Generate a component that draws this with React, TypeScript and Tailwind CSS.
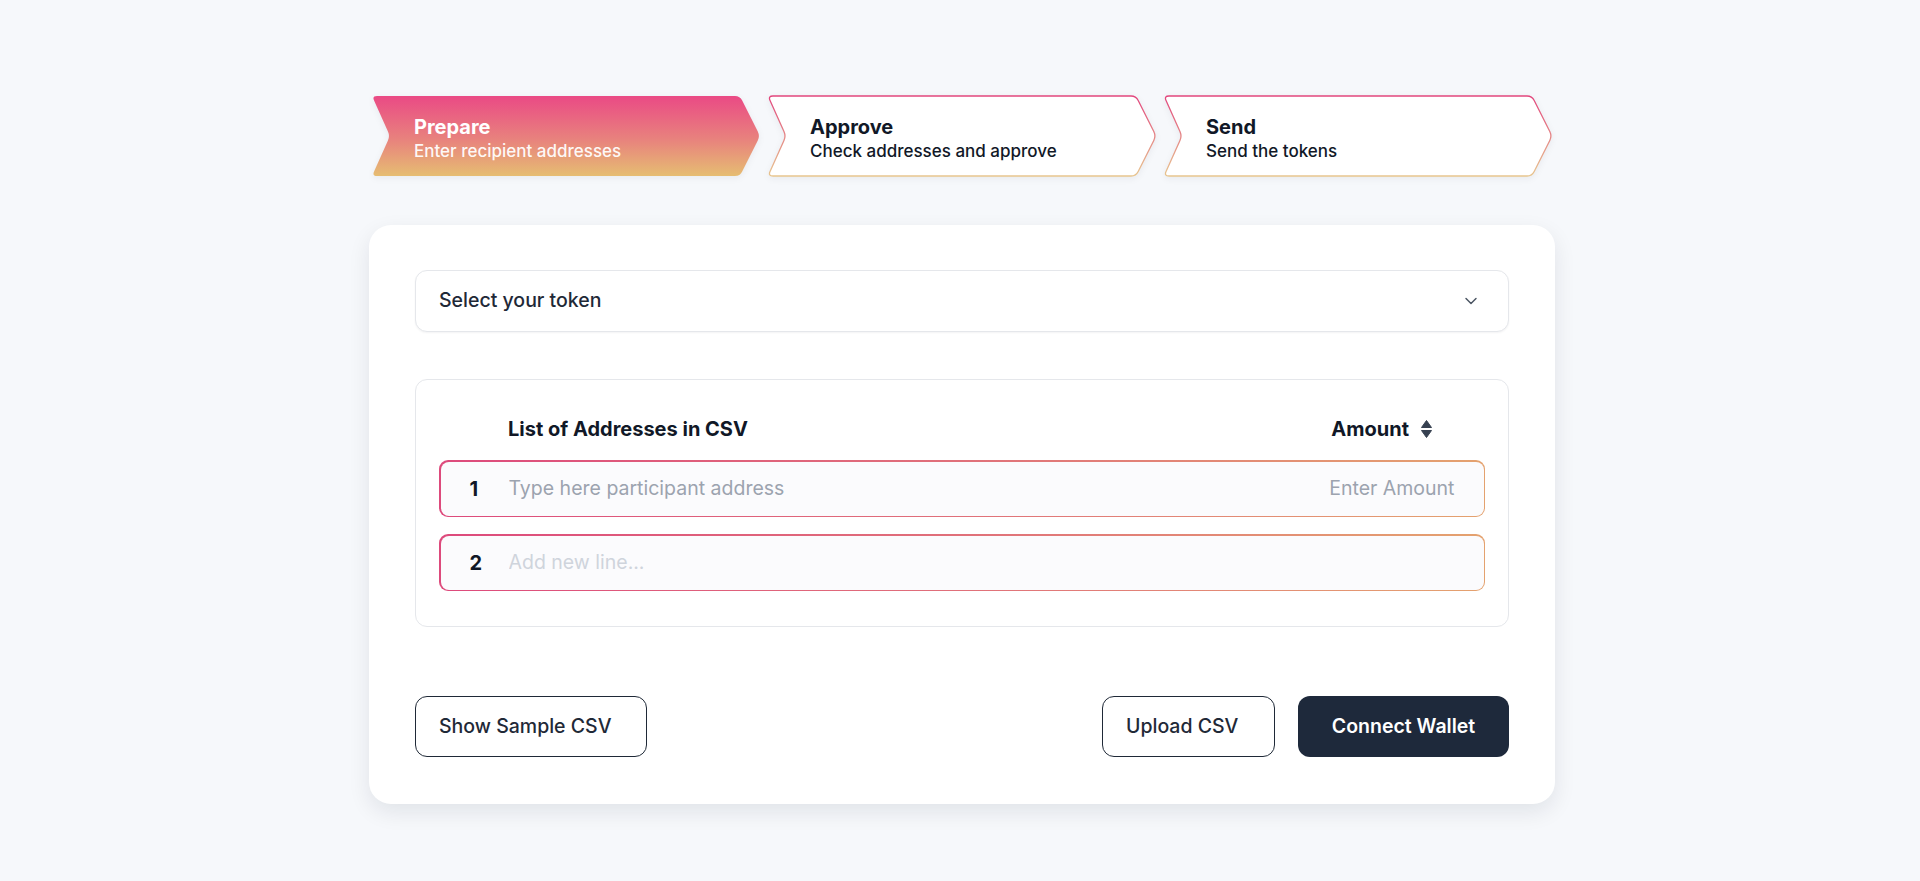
import { ChevronDown } from "lucide-react";

const STEP_PATH =
    "M5,0 L363,0 Q368,0 370.2,4.5 L385.8,35.5 Q388,40 385.8,44.5 L370.2,75.5 Q368,80 363,80 L5,80 Q0,80 2.05,75.45 L15.95,44.55 Q18,40 15.95,35.45 L2.05,4.55 Q0,0 5,0 Z";

interface Step {
    id: string;
    title: string;
    subtitle: string;
    active: boolean;
}

const steps: Step[] = [
    { id: "prepare", title: "Prepare", subtitle: "Enter recipient addresses", active: true },
    { id: "approve", title: "Approve", subtitle: "Check addresses and approve", active: false },
    { id: "send", title: "Send", subtitle: "Send the tokens", active: false },
];

function StepChevron({ step }: { step: Step }) {
    return (
        <div className="relative w-[388px] h-[80px]">
            <svg
                className="absolute inset-0 overflow-visible drop-shadow-[0_2px_3px_rgba(15,23,42,0.06)]"
                width="388"
                height="80"
                viewBox="0 0 388 80"
            >
                <defs>
                    <linearGradient id={`fill-${step.id}`} x1="0" y1="0" x2="0" y2="1">
                        <stop offset="0%" stopColor="#ea4a85" />
                        <stop offset="55%" stopColor="#e8837d" />
                        <stop offset="100%" stopColor="#e6bd72" />
                    </linearGradient>
                    <linearGradient id={`stroke-${step.id}`} x1="0" y1="0" x2="0" y2="1">
                        <stop offset="0%" stopColor="#e2467d" />
                        <stop offset="100%" stopColor="#e7c58e" />
                    </linearGradient>
                </defs>
                {step.active ? (
                    <path d={STEP_PATH} fill={`url(#fill-${step.id})`} />
                ) : (
                    <path d={STEP_PATH} fill="#ffffff" stroke={`url(#stroke-${step.id})`} strokeWidth="1.3" />
                )}
            </svg>
            <div className="relative flex flex-col justify-center h-full pl-[42px] pt-[4px]">
                <div className={`text-[20px] leading-[26px] font-bold ${step.active ? "text-white" : "text-[#111827]"}`}>
                    {step.title}
                </div>
                <div className={`text-[17px] leading-[23px] font-medium ${step.active ? "text-white/95" : "text-[#111827]"}`}>
                    {step.subtitle}
                </div>
            </div>
        </div>
    );
}

function SortIcon() {
    return (
        <svg width="13" height="20" viewBox="0 0 13 20" className="text-[#374151]">
            <path d="M6.5 1.5 L11.5 8.5 L1.5 8.5 Z" fill="currentColor" strokeLinejoin="round" stroke="currentColor" strokeWidth="1" />
            <path d="M6.5 18.5 L11.5 11.5 L1.5 11.5 Z" fill="currentColor" strokeLinejoin="round" stroke="currentColor" strokeWidth="1" />
        </svg>
    );
}

function AddressRow({ num, placeholder, showAmount }: { num: number; placeholder: string; showAmount: boolean }) {
    return (
        <div className="rounded-[9px] p-[1.5px] bg-gradient-to-r from-[#dd4a7c] via-[#e0707a] to-[#e4a26f]">
            <div className="flex items-center h-[54px] rounded-[8px] bg-[#fbfbfd] pl-[29px] pr-[29px]">
                <span className="w-[39px] text-[20px] font-bold text-[#111827]">{num}</span>
                <input
                    type="text"
                    placeholder={placeholder}
                    className={`flex-1 bg-transparent outline-none text-[19.5px] text-[#111827] ${
                        showAmount ? "placeholder-[#9ca3af]" : "placeholder-[#cfd4dc]"
                    }`}
                />
                {showAmount && (
                    <input
                        type="text"
                        placeholder="Enter Amount"
                        className="w-[150px] bg-transparent outline-none text-right text-[19.5px] text-[#111827] placeholder-[#9ca3af]"
                    />
                )}
            </div>
        </div>
    );
}

export default function App() {
    return (
        <div
            className="min-h-screen bg-[#f6f8fb] pt-[96px] pb-[78px] pl-[4px]"
            style={{ fontFamily: "Inter, 'Noto Sans', sans-serif" }}
        >
            <div className="w-[1180px] mx-auto flex gap-[8px]">
                {steps.map((step) => (
                    <StepChevron key={step.id} step={step} />
                ))}
            </div>

            <div className="w-[1186px] mx-auto mt-[49px] bg-white rounded-[22px] shadow-[0_8px_22px_rgba(15,23,42,0.09)] px-[46px] pt-[45px] pb-[47px]">
                <button className="w-full h-[62px] flex items-center justify-between px-[23px] rounded-[12px] border border-[#e5e7eb] shadow-[0_1px_2px_rgba(15,23,42,0.05)] bg-white">
                    <span className="text-[19.5px] font-medium text-[#1f2937]">Select your token</span>
                    <ChevronDown size={20} strokeWidth={1.75} className="text-[#4b5563] mr-[4px]" />
                </button>

                <div className="mt-[47px] rounded-[12px] border border-[#e5e7eb] px-[23px] pt-[35px] pb-[35px]">
                    <div className="flex items-center h-[28px] mb-[17px] pl-[69px] pr-[52px]">
                        <span className="flex-1 text-[20px] font-bold text-[#111827]">List of Addresses in CSV</span>
                        <span className="text-[20px] font-bold text-[#111827] mr-[11px]">Amount</span>
                        <SortIcon />
                    </div>
                    <div className="flex flex-col gap-[17px]">
                        <AddressRow num={1} placeholder="Type here participant address" showAmount={true} />
                        <AddressRow num={2} placeholder="Add new line..." showAmount={false} />
                    </div>
                </div>

                <div className="mt-[69px] flex items-center justify-between">
                    <button className="h-[61px] w-[232px] rounded-[12px] border-[1.5px] border-[#1f2937] bg-white text-left pl-[23px] text-[19.5px] font-medium text-[#1f2937]">
                        Show Sample CSV
                    </button>
                    <div className="flex gap-[23px]">
                        <button className="h-[61px] w-[173px] rounded-[12px] border-[1.5px] border-[#1f2937] bg-white text-left pl-[23px] text-[19.5px] font-medium text-[#1f2937]">
                            Upload CSV
                        </button>
                        <button className="h-[61px] w-[211px] rounded-[12px] bg-[#1e293b] text-[19.5px] font-semibold text-white">
                            Connect Wallet
                        </button>
                    </div>
                </div>
            </div>
        </div>
    );
}
